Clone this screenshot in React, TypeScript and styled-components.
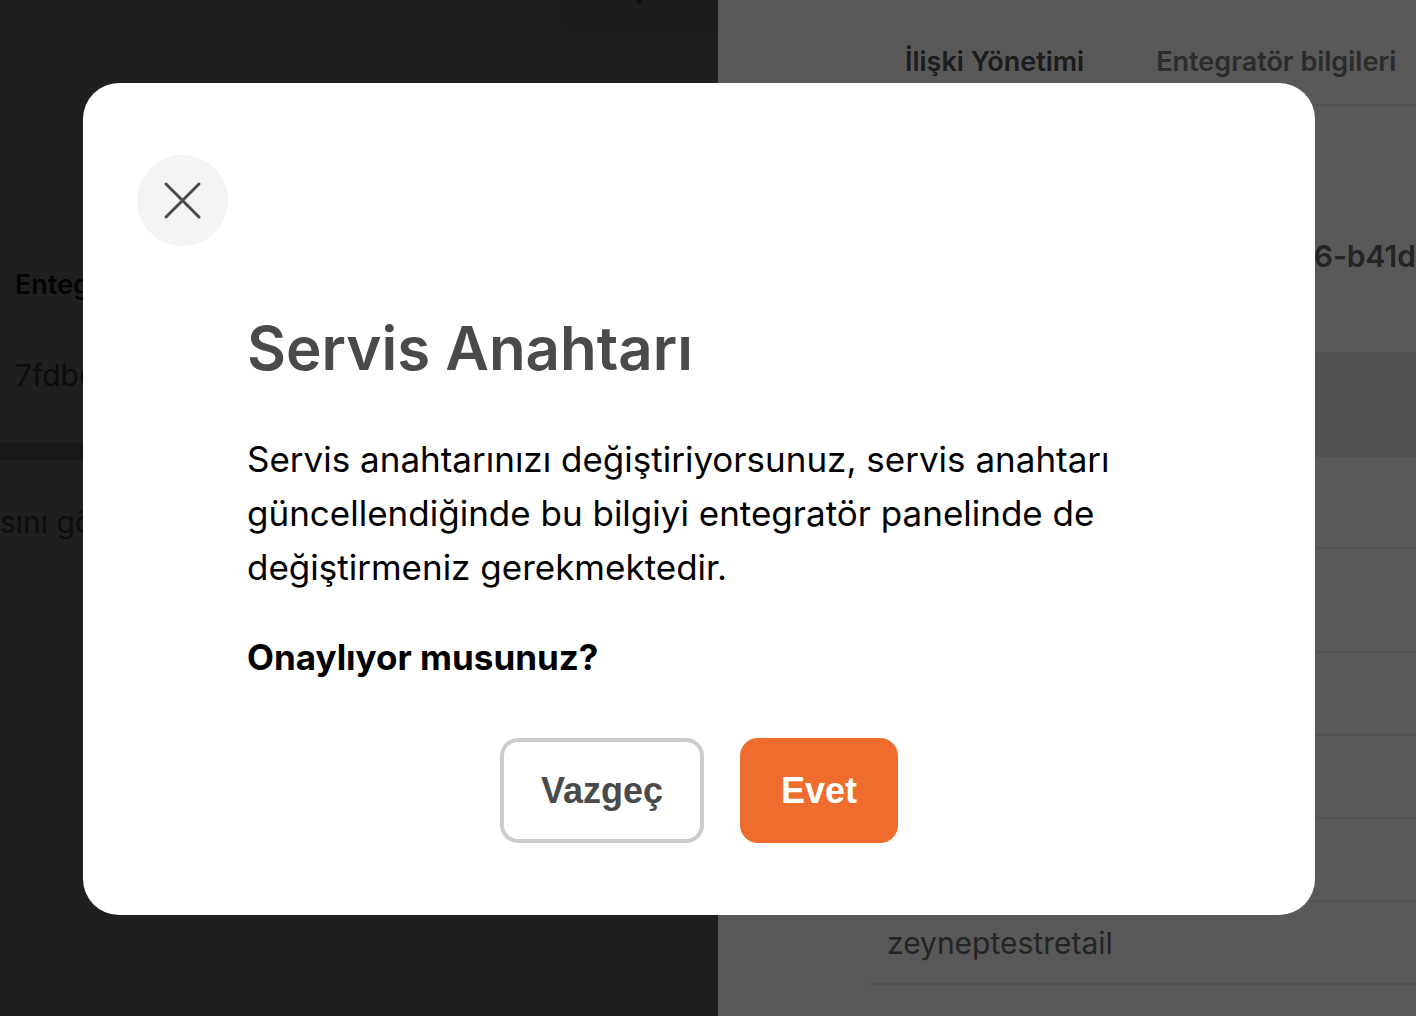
import React from "react";
import styled, { createGlobalStyle } from "styled-components";

const GlobalStyle = createGlobalStyle`
  *, *::before, *::after { box-sizing: border-box; }
  html, body { margin: 0; overflow: hidden; }
  body { font-family: Inter, "Liberation Sans", sans-serif; background: #5b5b5b; }
  h1, h2, p, ul { margin: 0; padding: 0; }
`;

const Page = styled.div`
  display: grid;
  grid-template-columns: minmax(0, 718fr) minmax(0, 698fr);
  height: 100vh;
  overflow: hidden;
`;

const Main = styled.main`
  background: #5b5b5b;
  overflow: hidden;
`;

const SearchRow = styled.div`
  display: flex;
  justify-content: flex-end;
  height: 232px;
`;

const SearchBox = styled.button`
  width: 160px;
  height: 33px;
  padding: 0 74px 0 0;
  border: 0;
  border-radius: 0 0 0 18px;
  background: #555555;
  display: flex;
  align-items: flex-start;
  justify-content: flex-end;
`;

const Table = styled.table`
  width: 100%;
  border-collapse: separate;
  border-spacing: 0;
  text-align: left;
`;

const HeadCell = styled.th`
  height: 104px;
  padding: 0 15px;
  border-top: 2px solid #555555;
  font-size: 27px;
  font-weight: 600;
  line-height: 36px;
  color: #0a0a0a;
`;

const Cell = styled.td`
  height: 78px;
  padding: 0 15px;
  border: solid #555555;
  border-width: 2px 0;
  font-size: 30px;
  line-height: 36px;
  color: #232323;
`;

const ScrollBar = styled.div`
  height: 18px;
  margin-top: 28px;
  background: #434343;
`;

const Note = styled.p`
  padding-top: 44px;
  font-size: 30px;
  line-height: 36px;
  color: #232323;
`;

const Drawer = styled.aside`
  padding-left: 151px;
  background: #ffffff;
  overflow: hidden;
`;

const Tabs = styled.nav`
  display: flex;
  align-items: flex-end;
  gap: 72px;
  height: 106px;
  padding: 0 18px 24px 36px;
  border-bottom: 2px solid #eaeaea;
  white-space: nowrap;
`;

const Tab = styled.a<{ $active?: boolean }>`
  font-size: 27px;
  font-weight: 600;
  line-height: 36px;
  color: ${(p) => (p.$active ? "#505050" : "#7c7c7c")};
  text-decoration: none;
`;

const KeyRow = styled.div`
  display: flex;
  align-items: center;
  justify-content: flex-end;
  height: 246px;
  padding-top: 54px;
  font-size: 30px;
  font-weight: 600;
  line-height: 36px;
  color: #676767;
`;

const Rows = styled.ul`
  list-style: none;
`;

const rowHeights = { head: 105, first: 92, tall: 104, normal: 83 };

const Row = styled.li<{ $size: keyof typeof rowHeights }>`
  display: flex;
  align-items: center;
  height: ${(p) => rowHeights[p.$size]}px;
  padding: 0 18px;
  border-bottom: 2px solid #eaeaea;
  background: ${(p) => (p.$size === "head" ? "#eaeaea" : "#ffffff")};
  font-size: 30px;
  line-height: 36px;
  color: #676767;
`;

const Scrim = styled.div`
  position: fixed;
  inset: 0;
  display: flex;
  align-items: flex-start;
  padding: 83px 101px 101px 83px;
  background: rgba(0, 0, 0, 0.65);
`;

const Dialog = styled.section`
  flex: 1;
  padding: 72px 54px;
  border-radius: 36px;
  background: #ffffff;
`;

const CloseButton = styled.button`
  display: grid;
  place-items: center;
  width: 91px;
  height: 91px;
  padding: 0;
  border: 0;
  border-radius: 50%;
  background: #f4f4f4;
`;

const Content = styled.div`
  padding: 64px 110px 0;
  font-size: 35px;
  line-height: 54px;
  color: #000000;
`;

const Title = styled.h1`
  margin-bottom: 46px;
  font-size: 60px;
  font-weight: 600;
  line-height: 76px;
  color: #4a4a4a;
`;

const Question = styled.p`
  margin-top: 36px;
  font-weight: 700;
`;

const Actions = styled.div`
  display: flex;
  justify-content: center;
  gap: 36px;
  margin-top: 54px;
`;

const Button = styled.button<{ $primary?: boolean }>`
  height: 105px;
  padding: 0 37px;
  border: 4px solid ${(p) => (p.$primary ? "#ee6c2d" : "#cccccc")};
  border-radius: 18px;
  background: ${(p) => (p.$primary ? "#ee6c2d" : "#ffffff")};
  color: ${(p) => (p.$primary ? "#ffffff" : "#4a4a4a")};
  font: 700 36px/54px "Liberation Sans", Arial, sans-serif;
`;

export default function App() {
  return (
    <>
      <GlobalStyle />
      <Page>
        <Main>
          <SearchRow>
            <SearchBox aria-label="Ara">
              <svg width="12" height="6" viewBox="0 0 12 6" aria-hidden="true">
                <path d="M2 -4L8 2" stroke="#303030" strokeWidth="4" strokeLinecap="round" />
              </svg>
            </SearchBox>
          </SearchRow>
          <Table>
            <thead>
              <tr><HeadCell scope="col">Enteg</HeadCell></tr>
            </thead>
            <tbody>
              <tr><Cell>7fdbe</Cell></tr>
            </tbody>
          </Table>
          <ScrollBar />
          <Note>sını gö</Note>
        </Main>
        <Drawer>
          <Tabs>
            <Tab href="#iliski" $active>İlişki Yönetimi</Tab>
            <Tab href="#entegrator">Entegratör bilgileri</Tab>
          </Tabs>
          <KeyRow>6-b41d</KeyRow>
          <Rows>
            <Row $size="head" />
            <Row $size="first" />
            <Row $size="tall" />
            <Row $size="normal" />
            <Row $size="normal" />
            <Row $size="normal" />
            <Row $size="normal">zeyneptestretail</Row>
          </Rows>
        </Drawer>
      </Page>
      <Scrim>
        <Dialog role="dialog" aria-modal="true" aria-labelledby="dialog-title">
          <CloseButton aria-label="Kapat">
            <svg width="40" height="40" viewBox="0 0 40 40" aria-hidden="true">
              <path d="M3 3L36 36M36 3L3 36" stroke="#4a4a4a" strokeWidth="3" strokeLinecap="round" />
            </svg>
          </CloseButton>
          <Content>
            <Title id="dialog-title">Servis Anahtarı</Title>
            <p>
              Servis anahtarınızı değiştiriyorsunuz, servis anahtarı güncellendiğinde
              bu bilgiyi entegratör panelinde de değiştirmeniz gerekmektedir.
            </p>
            <Question>Onaylıyor musunuz?</Question>
          </Content>
          <Actions>
            <Button type="button">Vazgeç</Button>
            <Button type="button" $primary>Evet</Button>
          </Actions>
        </Dialog>
      </Scrim>
    </>
  );
}
